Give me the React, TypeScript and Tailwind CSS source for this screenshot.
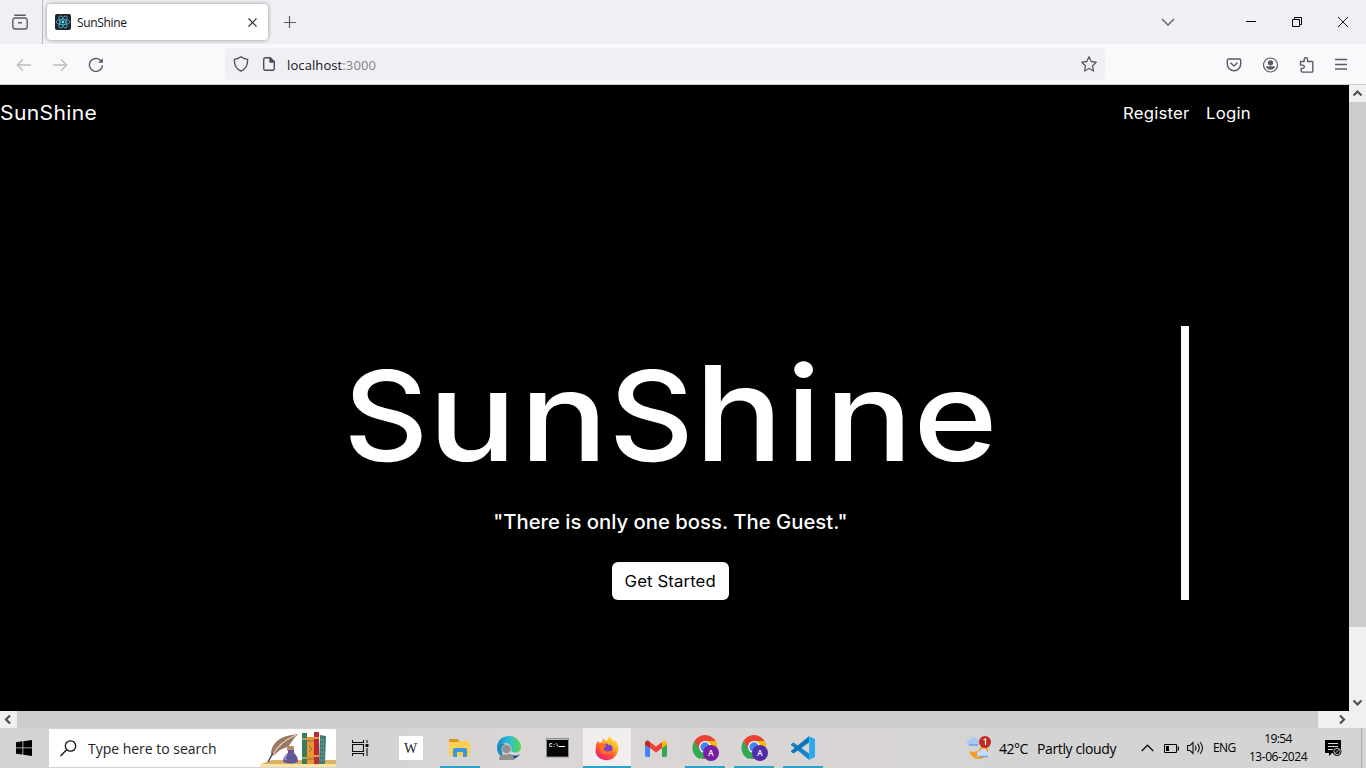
import React from "react";

function TabStrip() {
  return (
    <header className="flex h-11 shrink-0 items-center bg-[#f0eff4]">
      <div className="flex h-11 w-[43px] items-center border-r border-[#b9b9c0] pl-3">
        <svg width="16" height="16" viewBox="0 0 16 16" fill="none" stroke="#5b5b66" strokeWidth="1.4" strokeLinecap="round">
          <path d="M2.7 1.2h10.600" />
          <path d="M3 4h10a2.200 2.200 0 0 1 2.200 2.200v6.600a2.200 2.200 0 0 1-2.200 2.200H3a2.200 2.200 0 0 1-2.200-2.200V6.200A2.200 2.200 0 0 1 3 4z" />
          <path d="M6.500 8.800h3" />
        </svg>
      </div>
      <div className="ml-1 flex h-9 w-[221px] items-center rounded bg-white px-2 shadow-[0_0_4px_rgba(0,0,0,0.4)]">
        <svg width="16" height="16" viewBox="0 0 16 16" fill="none" stroke="#4fb4cf" strokeWidth="0.85">
          <rect width="16" height="16" rx="2" fill="#20232a" stroke="none" />
          <ellipse cx="8" cy="8" rx="6.800" ry="2.700" />
          <ellipse cx="8" cy="8" rx="6.800" ry="2.700" transform="rotate(60 8 8)" />
          <ellipse cx="8" cy="8" rx="6.800" ry="2.700" transform="rotate(120 8 8)" />
          <circle cx="8" cy="8" r="1.400" fill="#61dafb" stroke="none" />
        </svg>
        <span className="ml-1.5 flex-1 pt-[2px] font-['Open_Sans',sans-serif] text-[12px] tracking-[-0.350px] text-[#15141a]">SunShine</span>
        <svg className="mr-[3px]" width="9" height="9" viewBox="0 0 9 9" stroke="#2b2a33" strokeWidth="1.100"><path d="M.5 .5l8 8M8.500 .5l-8 8" /></svg>
      </div>
      <svg className="ml-4" width="12" height="12" viewBox="0 0 12 12" stroke="#5b5b66" strokeWidth="1.200"><path d="M0 6.500h12M5.500 0v12" /></svg>
      <svg className="ml-auto mr-[71px]" width="14" height="8" viewBox="0 0 14 8" fill="none" stroke="#5b5b66" strokeWidth="1.300"><path d="M1 1l6 6 6-6" /></svg>
      <div className="flex w-[120px] items-center">
        <svg width="10" height="10" viewBox="0 0 10 10" stroke="#000"><path d="M0 4.500h10" /></svg>
        <svg className="ml-9" width="10" height="10" viewBox="0 0 10 10" fill="none" stroke="#000"><path d="M.5 2.500h7v7h-7zM2.500 2.500v-2h7v7h-2" /></svg>
        <svg className="ml-9" width="10" height="10" viewBox="0 0 10 10" stroke="#000" strokeWidth=".9"><path d="M0 0l10 10M10 0L0 10" /></svg>
      </div>
    </header>
  );
}

function Toolbar() {
  return (
    <div className="flex h-[41px] shrink-0 items-center border-b border-[#ccccce] bg-[#f9f9fb]">
      <div className="flex w-[225px] items-center pl-4 pt-px">
        <svg width="16" height="14" viewBox="0 0 16 14" fill="none" stroke="#bdbdc1" strokeWidth="1.300"><path d="M15 7H1.500M7 1.300L1.300 7 7 12.700" /></svg>
        <svg className="ml-5" width="16" height="14" viewBox="0 0 16 14" fill="none" stroke="#bdbdc1" strokeWidth="1.300"><path d="M1 7h13.500M9 1.300L14.700 7 9 12.700" /></svg>
        <svg className="ml-5" width="16" height="16" viewBox="0 0 16 16" fill="none" stroke="#5b5b66" strokeWidth="1.400" strokeLinecap="round">
          <path d="M14.400 8.600a6.500 6.500 0 1 1-1.800-5.200L14 4.800" /><path d="M14.800 1.200v4.600h-4.600z" fill="#5b5b66" stroke="none" />
        </svg>
      </div>
      <div className="flex h-8 w-[880px] items-center rounded bg-[#f0eff4] pl-2 pr-2">
        <svg width="16" height="16" viewBox="0 0 16 16" fill="none" stroke="#4c4c57" strokeWidth="1.300" strokeLinejoin="round"><path d="M8 .8c2 1.500 4 2.200 6.600 2.600.3 4.700-1.200 9.200-6.600 11.800C2.600 12.600 1.100 8.100 1.400 3.400 4 3 6 2.300 8 .8z" /></svg>
        <svg className="ml-3" width="16" height="16" viewBox="0 0 16 16" fill="none" stroke="#4c4c57" strokeWidth="1.400" strokeLinejoin="round"><path d="M9 1.700H4.200A1.500 1.500 0 0 0 2.700 3.200v9.600a1.500 1.500 0 0 0 1.500 1.500h7.600a1.500 1.500 0 0 0 1.500-1.500V6z" /><path d="M9 1.700L13.300 6H9z" fill="#4c4c57" /></svg>
        <span className="ml-[10px] flex-1 pt-[3px] font-['Open_Sans',sans-serif] text-[13px] tracking-[0.100px] text-[#15141a]">localhost<span className="text-[#858589]">:3000</span></span>
        <svg width="16" height="16" viewBox="0 0 16 16" fill="none" stroke="#5b5b66" strokeWidth="1.300" strokeLinejoin="round"><path d="M8 .8l2.200 4.700 5 .7-3.600 3.600.9 5.200L8 12.500 3.500 15l.9-5.200L.8 6.200l5-.7z" /></svg>
      </div>
      <div className="ml-auto mr-[17px] flex items-center gap-5 pt-px">
        <svg width="16" height="16" viewBox="0 0 16 16" fill="none" stroke="#5b5b66" strokeWidth="1.400" strokeLinecap="round" strokeLinejoin="round"><path d="M2.500 2h11a1.200 1.200 0 0 1 1.200 1.200V7A6.700 6.700 0 0 1 1.300 7V3.200A1.200 1.200 0 0 1 2.500 2z" /><path d="M4.800 6L8 9l3.200-3" /></svg>
        <svg className="ml-px" width="16" height="16" viewBox="0 0 16 16" fill="#5b5b66"><circle cx="7.500" cy="8" r="7" fill="none" stroke="#5b5b66" strokeWidth="1.200" /><circle cx="7.500" cy="5.800" r="2.600" /><path d="M3.300 9.300h8.400v1c-1 1.700-2.400 2.500-4.200 2.500s-3.200-.8-4.200-2.500z" /></svg>
        <svg width="16" height="16" viewBox="0 0 16 16" fill="none" stroke="#5b5b66" strokeWidth="1.400" strokeLinejoin="round"><path d="M1.500 4.500h3.700V2.500a1.700 1.700 0 0 1 3.400 0v2H13a.8.8 0 0 1 .8.8v9a.8.8 0 0 1-.8.8H3.200a1 1 0 0 1-1-1v-2.700h1.500a1.600 1.600 0 0 0 0-3.300H1.500z" /></svg>
        <svg width="14" height="14" viewBox="0 0 14 14" stroke="#5b5b66" strokeWidth="1.300"><path d="M0 1.500h12M0 6.500h12M0 11h12" /></svg>
      </div>
    </div>
  );
}

function Arrow({ d }: { d: string }) {
  return (
    <span className="flex h-[17px] w-[17px] shrink-0 items-center justify-center bg-[#f0f0f0]">
      <svg width="9" height="9" viewBox="0 0 9 9" fill="none" stroke="#505050" strokeWidth="2.200"><path d={d} /></svg>
    </span>
  );
}

const headline = [
  { letter: "S", style: "inline-block w-[84px] scale-x-[1.05]" },
  { letter: "u", style: "inline-block w-[89px] scale-x-[1.18]" },
  { letter: "n", style: "inline-block w-[94px] scale-x-[1.18]" },
  { letter: "S", style: "inline-block w-[81px] scale-x-[1.05]" },
  { letter: "h", style: "inline-block w-[94px] origin-[50%_122px] scale-x-[1.18] scale-y-[1.06]" },
  { letter: "i", style: "inline-block w-[35px] origin-[50%_122px] scale-x-[1.1] scale-y-[1.06]" },
  { letter: "n", style: "inline-block w-[96px] scale-x-[1.18]" },
  { letter: "e", style: "inline-block w-[77px] scale-x-[1.15]" },
];

function Landing() {
  return (
    <main className="min-w-0 flex-1 overflow-hidden bg-black font-[Inter,sans-serif] text-white">
      <nav className="flex h-[57px] items-center">
        <div className="w-[1123px]"><span className="inline-block origin-left scale-x-[1.08] text-[19.500px] tracking-[0.350px]">SunShine</span></div>
        <div className="w-[83px]"><span className="inline-block origin-left scale-x-[1.080] text-[15.500px] tracking-[0.200px]">Register</span></div>
        <span className="inline-block origin-left scale-x-[1.080] text-[15.500px] tracking-[0.200px]">Login</span>
      </nav>
      <section className="ml-[160px] mt-[184px] flex h-[274px] w-[1029px] flex-col items-center border-r-8 border-white">
        <h1 className="mt-[11px] h-[158px] w-[1021px] whitespace-nowrap pl-[184px] text-[125px] font-medium leading-[158px]">
          {headline.map(({ letter, style }, i) => <span key={i} className={style + " text-center"}>{letter}</span>)}
        </h1>
        <p className="mt-[12px] scale-x-[1.040] text-[19.500px] font-medium leading-[30px]">"There is only one boss. The Guest."</p>
        <button className="mt-[25px] h-[38px] w-[117px] rounded-[6px] bg-white text-black"><span className="inline-block scale-x-[1.080] whitespace-nowrap text-[15.500px] tracking-[0.100px]">Get Started</span></button>
      </section>
    </main>
  );
}

function Chrome({ badge }: { badge: string }) {
  return (
    <svg width="28" height="28" viewBox="0 0 28 28">
      <circle cx="14" cy="13" r="12" fill="#ea4335" />
      <path d="M3.600 7l5.200 9 5.200 3-5.200 6A12 12 0 0 1 3.600 7z" fill="#34a853" />
      <path d="M14 7h10.400A12 12 0 0 1 14 25l5.200-9z" fill="#fbbc04" />
      <path d="M8.800 16A6 6 0 0 0 19.200 16L14 25q-3 0-6-1.700z" fill="#34a853" />
      <circle cx="14" cy="13" r="6" fill="#fff" />
      <circle cx="14" cy="13" r="4.700" fill="#4285f4" />
      <circle cx="20" cy="19" r="8" fill={badge} />
      <text x="20" y="22" textAnchor="middle" fill="#fff" fontSize="8" fontWeight="600" fontFamily="Open Sans, sans-serif">A</text>
    </svg>
  );
}

function Cell({ children, line, active }: { children: React.ReactNode; line?: boolean; active?: boolean }) {
  return (
    <div className={active ? "flex h-10 w-[49px] flex-col items-center border-l border-[#d9d5d4] bg-[#f0efee]" : "flex h-10 w-[49px] flex-col items-center"}>
      <div className="flex h-[38px] w-full items-center justify-center pt-0.5">{children}</div>
      {line && <span className={active ? "h-0.5 w-full bg-[#2aa3c8]" : "ml-px h-0.5 w-10 bg-[#2aa3c8]"} />}
    </div>
  );
}

function SearchArt() {
  return (
    <svg width="76" height="38" viewBox="0 0 76 38">
      <path d="M12 31h64v4H1z" fill="#d9b261" /><path d="M0 35h76v3H0z" fill="#fae2a0" />
      <path d="M11 25C12 13 20 7 38 5Q34 9 33 11Q29 17 27 18L20 21L13 27Z" fill="#9a7763" />
      <path d="M13 26Q18 14 36 6" stroke="#e5cfb6" fill="none" strokeWidth="1.300" />
      <path d="M13 24L8 33" stroke="#4b4168" strokeWidth="1.500" />
      <rect x="27" y="17" width="7" height="5" rx="1" fill="#ba8a63" />
      <path d="M28 21h6v3q4 3 4 9-7 3-15 0 0-6 5-9z" fill="#625796" /><path d="M27 26q-3 3-1 5" stroke="#a69acb" fill="none" strokeWidth="1.500" />
      <path d="M42 4h5v31h-5z" fill="#377c5b" /><path d="M42 10h5M42 29h5" stroke="#d3b860" strokeWidth="1.500" />
      <path d="M47 8h7v27h-7z" fill="#e69632" /><path d="M47 12h7M47 30h7M49 17l3 3-3 3" stroke="#a46826" fill="none" />
      <path d="M54 3h5v32h-5z" fill="#b72b31" /><path d="M54 9h5M54 27h5" stroke="#efbd51" strokeWidth="1.500" />
      <path d="M60 6l6 1-1 28h-6z" fill="#3c7f7a" /><path d="M61 11h4m-4 4h4m-4 4h4m-4 4h4m-4 4h4m-4 4h4" stroke="#c4b87d" strokeDasharray="1 1" />
    </svg>
  );
}

function Taskbar() {
  return (
    <footer className="flex h-10 shrink-0 items-center bg-[linear-gradient(90deg,#d3d3d3_0%,#d4d3d3_28%,#dad6d5_38%,#d9d5d4_60%,#d4d4d4_75%,#d4d4d4_100%)] font-['Open_Sans',sans-serif] text-black">
      <div className="flex w-[49px] pl-4"><svg width="16" height="16" viewBox="0 0 16 16"><path d="M0 2.200L6.500 1.300v6.200H0zM7.300 1.200L16 0v7.500H7.300zM0 8.300h6.500v6.300L0 13.700zM7.300 8.300H16V16l-8.700-1.200z" /></svg></div>
      <div className="flex h-[38px] w-[287px] items-center bg-white pl-[11px]">
        <svg width="17" height="17" viewBox="0 0 17 17" fill="none" stroke="#111" strokeWidth="1.300"><circle cx="10.500" cy="6" r="5.200" /><path d="M6.700 9.700L.5 16" /></svg>
        <span className="ml-[11px] flex-1 whitespace-nowrap text-[14px] tracking-[-0.020px] text-[#222]">Type here to search</span>
        <SearchArt />
      </div>
      <div className="flex w-[50px] justify-center pr-px"><svg width="17" height="16" viewBox="0 0 17 16" fill="none" stroke="#111" strokeWidth="1.100"><path d="M.5 0v2.500h11V0M.5 16v-2.500h11V16M.5 4.500h11v7H.5zM15 0v3M15 8v8" /><path d="M13.500 4h3v3h-3z" fill="#111" stroke="none" /></svg></div>
      <Cell><span className="flex h-6 w-6 items-center justify-center bg-white font-['Liberation_Serif',serif] text-[14px] text-[#222]">W</span></Cell>
      <Cell line>
        <svg width="22" height="20" viewBox="0 0 22 20"><path d="M0 2q0-1 1-1h8l2 3h10v4H0z" fill="#dc9a18" /><path d="M0 4h10l1-1h10v15H0z" fill="#fdcf56" /><path d="M4 19v-7q0-2 2-2h10q2 0 2 2v7h-4v-5H8v5z" fill="#3a98dc" /></svg>
      </Cell>
      <Cell>
        <svg width="26" height="26" viewBox="0 0 26 26">
          <defs><linearGradient id="edgeTop" x1="0" x2="1"><stop offset="0" stopColor="#168acb" /><stop offset=".5" stopColor="#28bed4" /><stop offset="1" stopColor="#5bd64c" /></linearGradient></defs>
          <path d="M1 12C2-1 20-3 24.500 9c2 7-3 10-8 8-3-1 0-3-2-6C12 7 5 6 1 12z" fill="url(#edgeTop)" />
          <path d="M1 13c0-4 5-6 9-4-6 2-5 11 0 15C5 23 1 18 1 13z" fill="#168cc0" />
          <path d="M13 19q7 3 11 0Q20 26 10 24z" fill="#174f91" />
          <circle cx="10.500" cy="14" r="4.600" fill="#90908f" stroke="#d9d5d4" strokeWidth=".6" />
          <path d="M3 25c0-4 2-5.500 4-5.500h7c3 0 4 2 4 5.500z" fill="#90908f" />
        </svg>
      </Cell>
      <Cell>
        <svg width="23" height="20" viewBox="0 0 23 20"><rect x=".5" y=".5" width="22" height="18.500" fill="#050505" stroke="#909090" /><path d="M1 1.500h21" stroke="#bbb" /><text x="3" y="8.500" fontSize="5.500" fontWeight="700" fill="#fff" fontFamily="Liberation Mono, monospace">C:\</text><path d="M13 8.500h6" stroke="#fff" /></svg>
      </Cell>
      <Cell line active>
        <svg width="24" height="25" viewBox="0 0 24 25"><defs><linearGradient id="fox" x1=".85" y1="0" x2=".2" y2="1"><stop offset="0" stopColor="#fff14a" /><stop offset=".35" stopColor="#ffae22" /><stop offset=".65" stopColor="#ff5037" /><stop offset="1" stopColor="#e51d79" /></linearGradient></defs><path d="M3 5l2 2 2-1 1-4 3 3 2-1 1-4c3 3 4 3 5 6l1-2c3 3 4 7 3 11-2 7-8 10-13 9C3 23-1 18 1 11c0-2 0-4 2-6z" fill="url(#fox)" /><circle cx="12.500" cy="12.500" r="5" fill="#7543cd" /><path d="M4 9q5-2 7 0c1 2-2 2-2 4 1 3 5 3 8 1-1 5-9 6-12 1z" fill="#ff6b2d" /><path d="M12 5q7 0 7 7-3-5-6-3z" fill="#ffb82c" /></svg>
      </Cell>
      <Cell>
        <svg width="22" height="17" viewBox="0 0 22 17"><path d="M0 3l5 4v10H1.500Q0 17 0 15.500z" fill="#4285f4" /><path d="M22 3l-5 4v10h3.500q1.500 0 1.500-1.500z" fill="#34a853" /><path d="M5 2l6 4.500L17 2v6l-6 4.500L5 8z" fill="#ea4335" /><path d="M0 3q0-3 3-2.500L5 2v6L0 4.500z" fill="#c5221f" /><path d="M22 3q0-3-3-2.500L17 2v6l5-3.500z" fill="#fbbc04" /></svg>
      </Cell>
      <Cell line><Chrome badge="#7b1fa2" /></Cell>
      <Cell line><Chrome badge="#512da8" /></Cell>
      <Cell line>
        <svg width="24" height="24" viewBox="0 0 24 24"><path d="M2.500 6.500L18 17.500v6.200L.3 9.200q-.6-.7 0-1.300z" fill="#1684c5" /><path d="M2.500 17.500L18 6.500V.3L.3 14.800q-.6.700 0 1.300z" fill="#0876b8" /><path d="M17.500 0L24 3v18l-6.500 3q.7-.500.7-1.500v-21q0-1-.7-1.500z" fill="#2ba9ee" /></svg>
      </Cell>
      <div className="ml-[139px] flex w-[174px] items-center">
        <svg width="27" height="24" viewBox="0 0 27 24"><path d="M3 15c7 3 13-1 13-9 10 5 7 17-3 17-5 0-8-3-10-8z" fill="#f89b24" /><path d="M4 10a3 3 0 0 1 0-6C5 0 10 0 11 4c4 0 4 6 0 6z" fill="#a9c9f4" /><path d="M3 9h9" stroke="#789fe0" strokeWidth="1.500" /><path d="M14 21a3 3 0 0 1 0-6c2-4 7-3 7 1 4 0 4 5 0 5z" fill="#c3dcff" /><path d="M13 20.500h9" stroke="#7da3df" strokeWidth="1.500" /><circle cx="19" cy="6" r="6" fill="#c42b1c" /><path d="M17.500 4l2-1v6" stroke="#fff" strokeWidth="1.200" fill="none" /></svg>
        <span className="ml-[6px] w-[38px] whitespace-nowrap text-[14px] tracking-[-0.500px]">42°C</span>
        <span className="whitespace-nowrap text-[14px] tracking-[-0.370px]">Partly cloudy</span>
      </div>
      <svg className="ml-px" width="13" height="8" viewBox="0 0 13 8" fill="none" stroke="#111" strokeWidth="1.400"><path d="M.7 7L6.500 1.200 12.300 7" /></svg>
      <svg className="ml-[10px]" width="15" height="9" viewBox="0 0 15 9" fill="none" stroke="#000"><path d="M.5 .5h12v8H.5zM13 3h1.500v3H13" /><path d="M2 2h3v5H2z" fill="#000" stroke="none" /></svg>
      <svg className="ml-[8px]" width="18" height="14" viewBox="0 0 18 14" fill="none" stroke="#111" strokeWidth="1.100"><path d="M.6 4.500H3l3-3v11l-3-3H.6zM8 4.500q2 2.500 0 5M10.500 2.700q3.500 4.300 0 8.600M13 1q5 6 0 12" /></svg>
      <span className="ml-[8px] w-[36px] text-[12px] tracking-[-0.650px]">ENG</span>
      <div className="flex w-[58px] flex-col items-center whitespace-nowrap text-[12px] leading-[18px] tracking-[-0.650px]"><span>19:54</span><span className="tracking-[-0.450px]">13-06-2024</span></div>
      <svg className="ml-[18px]" width="17" height="16" viewBox="0 0 17 16"><path d="M0 0h16v13H7l-3 3v-3H0z" /><path d="M3 3.500h10M3 6.500h10M3 9.500h5" stroke="#ddd" strokeWidth="1.100" /><circle cx="12" cy="11.500" r="4.500" fill="#111" /><circle cx="12" cy="11.500" r="3.200" fill="none" stroke="#d4d4d4" strokeWidth=".8" /><path d="M9.800 13.700l4.400-4.400" stroke="#d4d4d4" strokeWidth=".8" /></svg>
      <span className="ml-auto mr-[4px] h-10 w-px bg-[#aaa]" />
    </footer>
  );
}

export default function App() {
  return (
    <div className="flex h-[768px] w-[1366px] flex-col overflow-hidden">
      <TabStrip />
      <Toolbar />
      <div className="flex min-h-0 flex-1">
        <Landing />
        <aside className="flex w-[17px] shrink-0 flex-col bg-[#f0f0f0]">
          <Arrow d="M.5 6.500l4-4 4 4" />
          <div className="h-[525px] bg-[#cdcdcd]" />
          <div className="mt-auto"><Arrow d="M.5 2.500l4 4 4-4" /></div>
        </aside>
      </div>
      <div className="flex h-[17px] shrink-0 bg-[#f0f0f0]">
        <Arrow d="M6 .5l-4 4 4 4" />
        <div className="w-[1301px] bg-[#cdcdcd]" />
        <div className="ml-auto mr-[16px]"><Arrow d="M3 .5l4 4-4 4" /></div>
      </div>
      <Taskbar />
    </div>
  );
}
